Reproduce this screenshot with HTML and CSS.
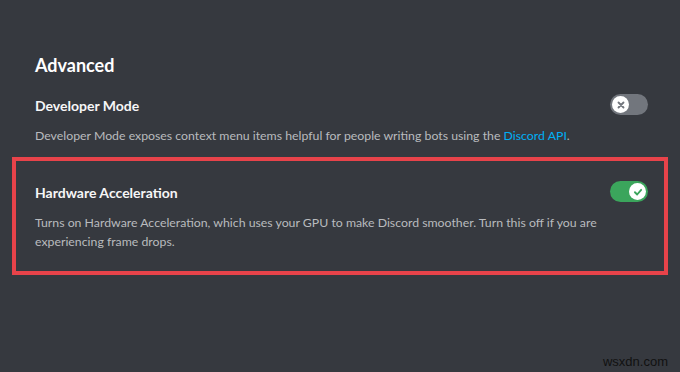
FILE: index.html
```html
<!DOCTYPE html>
<html lang="en">
<head>
  <meta charset="UTF-8">
  <title>Advanced Settings</title>
  <link rel="stylesheet" href="styles.css">
</head>
<body>
  <div class="settings">
    <h2 class="section-title">Advanced</h2>

    <div class="setting">
      <div class="setting-row">
        <span class="setting-name">Developer Mode</span>
        <span class="toggle toggle-off">
          <span class="knob">
            <svg viewBox="0 0 12 12" width="10" height="10">
              <path d="M3 3 L9 9 M9 3 L3 9" stroke="#72767d" stroke-width="2.2" stroke-linecap="round" fill="none"/>
            </svg>
          </span>
        </span>
      </div>
      <p class="setting-desc">Developer Mode exposes context menu items helpful for people writing bots using the <a class="link">Discord API</a>.</p>
    </div>

    <div class="setting highlight">
      <div class="setting-row">
        <span class="setting-name">Hardware Acceleration</span>
        <span class="toggle toggle-on">
          <span class="knob">
            <svg viewBox="0 0 12 12" width="10" height="10">
              <path d="M2.3 6.3 L5 9 L9.8 3.4" stroke="#3ba55c" stroke-width="2.2" stroke-linecap="round" stroke-linejoin="round" fill="none"/>
            </svg>
          </span>
        </span>
      </div>
      <p class="setting-desc wrap">Turns on Hardware Acceleration, which uses your GPU to make Discord smoother. Turn this off if you are experiencing frame drops.</p>
    </div>
  </div>

  <span class="watermark">wsxdn.com</span>
</body>
</html>
```

FILE: styles.css
```css
body {
  margin: 0;
  height: 372px;
  background-color: #36393f;
  font-family: Lato, 'Noto Sans', sans-serif;
  position: relative;
  overflow: hidden;
}

.settings {
  padding: 53px 32px 0 35px;
}

.section-title {
  margin: 0 0 17px;
  font-size: 18px;
  line-height: 24px;
  font-weight: 700;
  color: #ffffff;
}

.setting-row {
  display: flex;
  justify-content: space-between;
  align-items: flex-start;
}

.setting-name {
  font-size: 14px;
  line-height: 20px;
  font-weight: 700;
  color: #f6f6f7;
  padding-top: 2px;
}

.setting-desc {
  margin: 10px 0 0;
  font-size: 12.3px;
  line-height: 19px;
  color: #b9bbbe;
}

.wrap {
  max-width: 575px;
}

.link {
  color: #00aff4;
}

.highlight {
  margin: 12px -20px 0 -23px;
  padding: 20px 16px 20px 19px;
  border: 4px solid #e8434a;
}

.toggle {
  width: 38px;
  height: 21px;
  border-radius: 11px;
  display: flex;
  align-items: center;
  padding: 0 2px;
  box-sizing: border-box;
}

.toggle-off {
  background-color: #72767d;
  justify-content: flex-start;
}

.toggle-on {
  background-color: #3ba55c;
  justify-content: flex-end;
}

.knob {
  width: 17px;
  height: 17px;
  border-radius: 50%;
  background-color: #ffffff;
  display: flex;
  align-items: center;
  justify-content: center;
}

.watermark {
  position: absolute;
  right: 12px;
  bottom: 3px;
  font-family: 'Liberation Sans', Arial, sans-serif;
  font-size: 13px;
  color: #111111;
}
```
